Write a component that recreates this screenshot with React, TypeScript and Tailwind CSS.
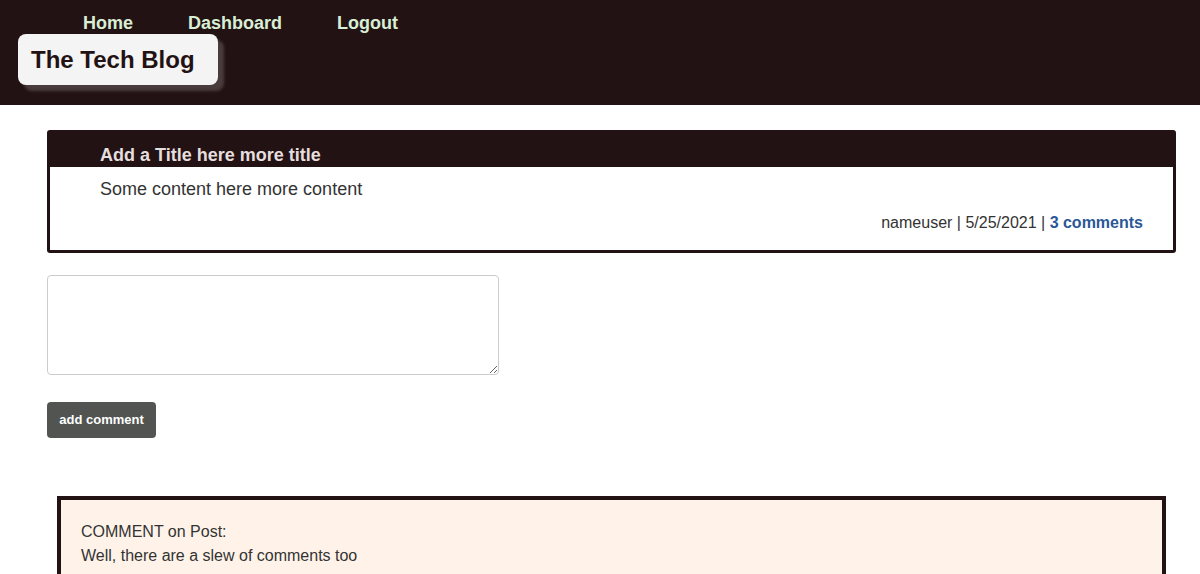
export default function App() {
  return (
    <div className="min-h-[574px] bg-white font-['Liberation_Sans',Arial,sans-serif] text-[#333]">
      <header className="h-[105px] bg-[#231213]">
        <nav className="flex h-[34px] gap-[55px] pl-[83px] pt-[13px] text-[18px] font-bold leading-[21px] text-[#d8eed5]">
          <a href="#">Home</a>
          <a href="#">Dashboard</a>
          <a href="#">Logout</a>
        </nav>
        <div className="ml-[18px] flex h-[51px] w-[200px] items-center rounded-lg bg-[#f4f4f4] pl-[13px] shadow-[6px_6px_3px_#4a3c3d]">
          <h1 className="text-[24px] font-bold text-[#231213]">The Tech Blog</h1>
        </div>
      </header>

      <main className="pt-[25px]">
        <div className="ml-[47px] mr-[24px] rounded-[3px] border-[3px] border-[#231213]">
          <div className="bg-[#231213] pb-[1px] pl-[50px] pt-[12px] text-[18px] font-bold leading-[21px] text-[#e5dede]">
            Add a Title here more title
          </div>
          <p className="pl-[50px] pt-[12px] text-[18px] leading-[21px]">Some content here more content</p>
          <p className="mt-[14px] pb-[18px] pr-[30px] text-right text-[16px] leading-[18px]">
            nameuser | 5/25/2021 | <a href="#" className="font-bold text-[#2b5797]">3 comments</a>
          </p>
        </div>

        <form className="ml-[47px] mt-[22px] flex flex-col items-start">
          <textarea className="h-[100px] w-[452px] rounded border border-[#ccc] bg-white" />
          <button
            type="button"
            className="mt-[27px] h-[36px] w-[109px] rounded bg-[#515451] text-[13px] font-bold text-white"
          >
            add comment
          </button>
        </form>

        <div className="ml-[57px] mr-[34px] mt-[58px] border-4 border-b-0 border-[#231213] bg-[#fff3e9] pb-4 pl-[20px] pt-[20px] text-[16px] leading-6">
          <p>COMMENT on Post:</p>
          <p>Well, there are a slew of comments too</p>
        </div>
      </main>
    </div>
  );
}
